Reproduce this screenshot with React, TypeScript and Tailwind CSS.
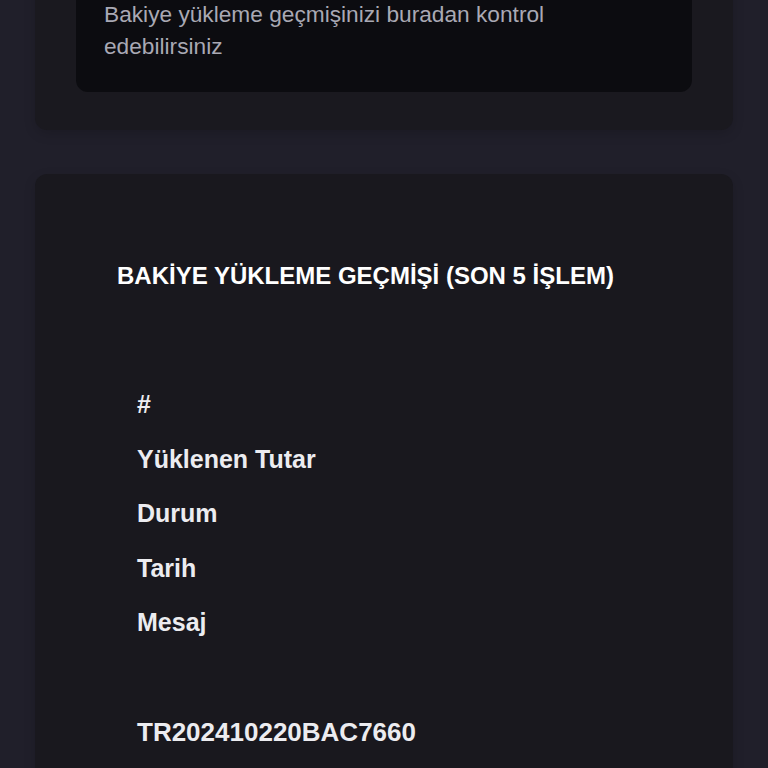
import React from 'react';

const headers = ['#', 'Yüklenen Tutar', 'Durum', 'Tarih', 'Mesaj'];

const App: React.FC = () => {
  return (
    <div className="min-h-screen bg-[#201f2a] px-[35px] pb-10 font-['Liberation_Sans',sans-serif] overflow-hidden">
      {/* Info card (scrolled partially out of view) */}
      <div className="-mt-[74px] rounded-xl bg-[#1a191f] px-[41px] pt-[20px] pb-[38px] shadow-[0_4px_12px_rgba(0,0,0,0.15)]">
        <div className="rounded-xl bg-[#0c0c10] px-[28px] pt-[52px] pb-[30px]">
          <p className="text-[22.7px] leading-[32px] text-[#a9a9b4]">
            Bakiye yükleme geçmişinizi buradan kontrol
            <br />
            edebilirsiniz
          </p>
        </div>
      </div>

      {/* History card */}
      <div className="mt-[44px] rounded-xl bg-[#19181e] px-[82px] pt-[89px] pb-10 shadow-[0_4px_12px_rgba(0,0,0,0.15)]">
        <h2 className="text-[24px] font-bold leading-[26px] text-white">
          BAKİYE YÜKLEME GEÇMİŞİ (SON 5 İŞLEM)
        </h2>

        <div className="mt-[102px] pl-[20px]">
          <div className="flex flex-col">
            {headers.map((h) => (
              <div key={h} className="h-[54.5px] text-[25px] font-bold leading-[26px] text-[#ececf0]">
                {h}
              </div>
            ))}
          </div>
          <div className="mt-[54px] text-[26px] font-bold leading-[28px] text-[#ececf0]">
            TR202410220BAC7660
          </div>
        </div>
      </div>
    </div>
  );
};

export default App;
